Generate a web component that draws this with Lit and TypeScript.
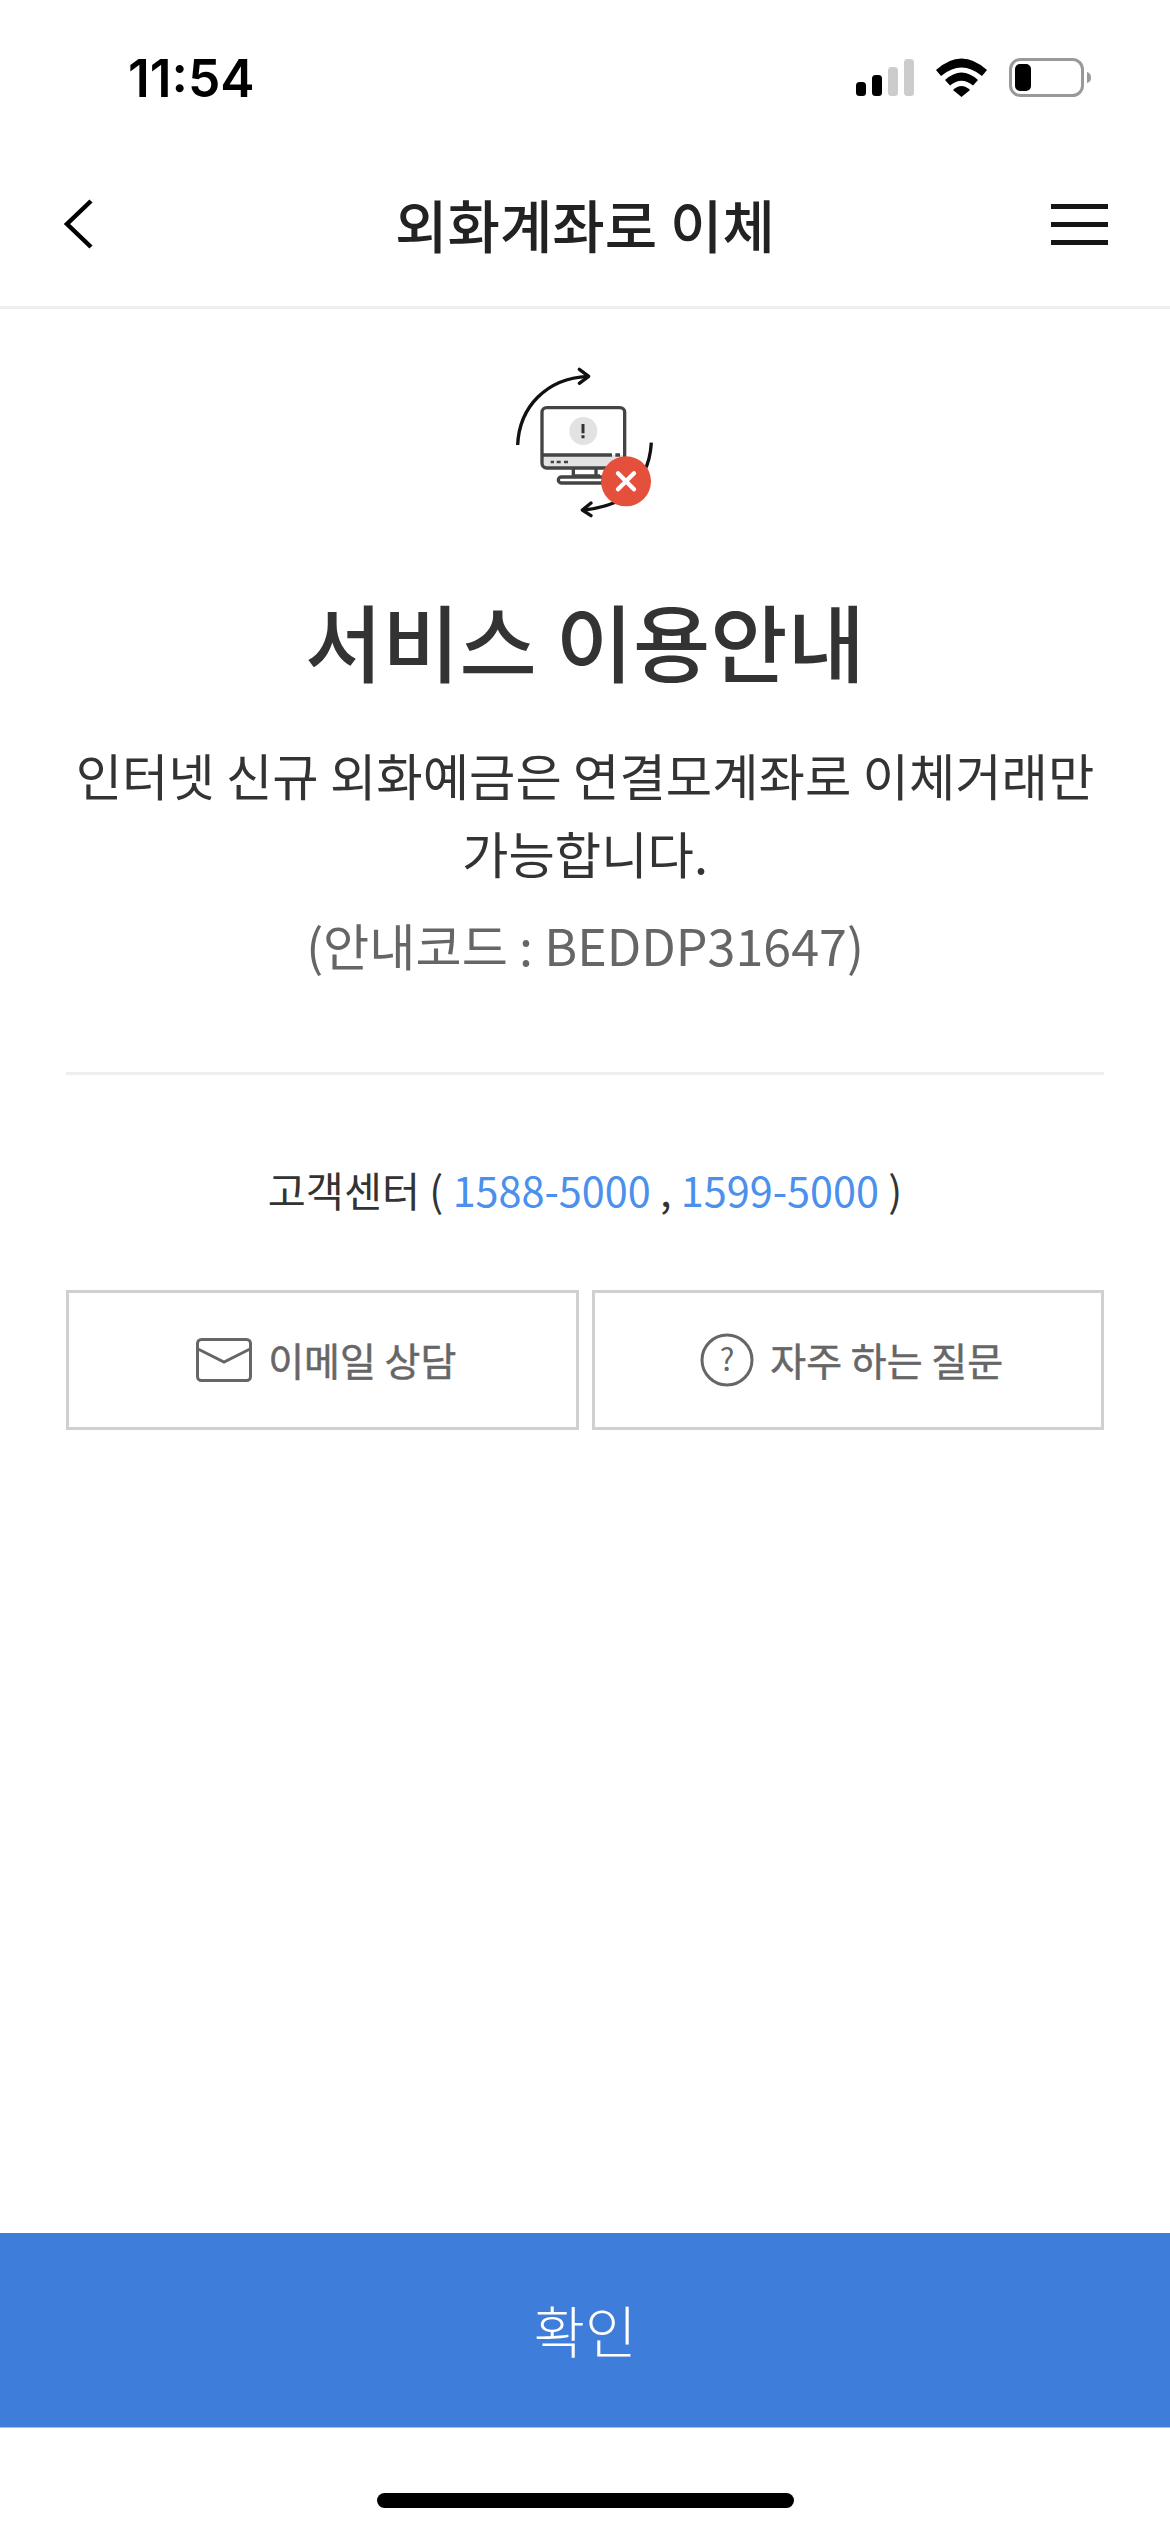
import { LitElement, html, css } from 'lit';
import { customElement } from 'lit/decorators.js';

@customElement('app-root')
export class AppRoot extends LitElement {
  static styles = css`
    :host {
      display: flex;
      flex-direction: column;
      width: 1170px;
      height: 2532px;
      background: #fff;
      font-family: "Noto Sans CJK KR", "Noto Sans", sans-serif;
      color: #333;
    }
    .status {
      height: 142px;
      display: flex;
      align-items: flex-start;
      justify-content: space-between;
      padding: 0 78px 0 128px;
    }
    .time {
      font-family: Inter, "Liberation Sans", sans-serif;
      font-size: 51.500px;
      font-weight: 600;
      line-height: 50px;
      margin-top: 53px;
      color: #000;
    }
    .status svg { margin-top: 58px; }
    .header {
      height: 167px;
      box-sizing: border-box;
      display: grid;
      grid-template-columns: 1fr auto 1fr;
      align-items: center;
      padding: 0 62px;
      border-bottom: 3px solid #eee;
    }
    .header .menu { justify-self: end; }
    .header h1 {
      margin: 0 0 2px;
      font-size: 57px;
      font-weight: 500;
      line-height: 70px;
      color: #222;
    }
    .main {
      display: flex;
      flex-direction: column;
      align-items: center;
      padding: 41px 66px 0;
    }
    .title {
      margin: 55px 0 0;
      font-size: 84px;
      font-weight: 500;
      line-height: 110px;
      color: #333;
    }
    .desc {
      margin: 41px 0 0;
      font-size: 50.400px;
      font-weight: 400;
      line-height: 78px;
      text-align: center;
      color: #333;
    }
    .code {
      margin: 13px 0 0;
      font-size: 50.200px;
      font-weight: 400;
      line-height: 79px;
      color: #666;
    }
    .rule {
      align-self: stretch;
      height: 3px;
      background: #eee;
      margin-top: 88px;
    }
    .contact {
      margin: 81px 0 0;
      font-size: 41.400px;
      font-weight: 400;
      line-height: 66px;
      color: #333;
    }
    .contact a { color: #4a90ec; text-decoration: none; }
    .actions {
      align-self: stretch;
      display: grid;
      grid-template-columns: 1fr 1fr;
      gap: 13px;
      margin-top: 68px;
    }
    .action {
      height: 140px;
      box-sizing: border-box;
      border: 3px solid #d0d0d0;
      padding-left: 8px;
      display: flex;
      align-items: center;
      justify-content: center;
      gap: 16px;
      font-size: 39px;
      font-weight: 400;
      color: #666;
    }
    .action span {
      padding-bottom: 3px;
      -webkit-text-stroke: 0.500px #666;
    }
    .confirm {
      margin-top: auto;
      height: 195px;
      box-sizing: border-box;
      padding-bottom: 4px;
      background: #3e7eda;
      border-bottom: 1px solid #9cc3f3;
      color: #fff;
      display: flex;
      align-items: center;
      justify-content: center;
      font-size: 56px;
      font-weight: 300;
    }
    .home {
      height: 104px;
      display: flex;
      justify-content: center;
      align-items: flex-start;
    }
    .home div {
      width: 417px;
      height: 15px;
      margin-top: 65px;
      border-radius: 7.500px;
      background: #000;
    }
  `;

  render() {
    return html`
      <div class="status">
        <div class="time">11:54</div>
        <svg width="236" height="40" viewBox="856 58 236 40">
          <rect x="856" y="82" width="10" height="14" rx="3.500" fill="#000" />
          <rect x="872" y="75" width="10" height="21" rx="3.500" fill="#000" />
          <rect x="888" y="67" width="10" height="29" rx="3.500" fill="#ccc" />
          <rect x="904" y="59" width="10" height="37" rx="3.500" fill="#ccc" />
          <path d="M936 70 Q961.500 47 987 70 L982 76 Q961.500 59 941 76 Z" fill="#000" />
          <path d="M945 80 Q961.500 65 978 80 L973 85.500 Q961.500 76 950 85.500 Z" fill="#000" />
          <path d="M953 90 Q961.500 82 970 90 L961.500 97 Z" fill="#000" />
          <rect x="1010.500" y="59.500" width="72" height="36" rx="10" fill="none" stroke="#999" stroke-width="3" />
          <rect x="1015" y="64" width="16" height="27" rx="5" fill="#000" />
          <path d="M1087 72 Q1091 73 1091 77.500 Q1091 82 1087 83 Z" fill="#999" />
        </svg>
      </div>
      <div class="header">
        <svg width="32" height="52" viewBox="0 0 32 52">
          <path d="M29 3 L5 26 L29 49" fill="none" stroke="#000" stroke-width="4.500" />
        </svg>
        <h1>외화계좌로 이체</h1>
        <svg class="menu" width="57" height="41" viewBox="0 0 57 41">
          <path d="M0 2.500 H57 M0 20.500 H57 M0 38.500 H57" stroke="#151515" stroke-width="5" />
        </svg>
      </div>
      <div class="main">
        <svg width="190" height="180" viewBox="0 0 570 540">
          <g fill="none" stroke="#111" stroke-width="10">
            <path d="M83 285 C88 170 170 85 293 79" />
            <path d="M268 58 L296 79 L268 100" stroke-linecap="round" stroke-linejoin="round" />
            <path d="M484 278 C482 310 476 340 462 365" />
            <path d="M380 455 C350 468 320 476 282 480" />
            <path d="M303 459 L277 480 L303 497" stroke-linecap="round" stroke-linejoin="round" />
          </g>
          <path d="M156 315 H404 V340 Q404 354 390 354 H170 Q156 354 156 340 Z" fill="#e2e2e2" />
          <g fill="none" stroke="#444" stroke-width="10" stroke-linejoin="round">
            <rect x="156" y="173" width="248" height="181" rx="14" />
            <path d="M156 315 H366 M376 315 H390" />
            <path d="M250 354 V380 M318 354 V380 M250 378 H330" />
            <rect x="205" y="381" width="160" height="18" rx="9" />
          </g>
          <path d="M182 336 H192 M200 336 H212 M222 336 H234" stroke="#444" stroke-width="8" />
          <circle cx="280" cy="243" r="42" fill="#e2e2e2" />
          <path d="M279 222 V250 M279 256 V265" stroke="#333" stroke-width="9" />
          <circle cx="408" cy="394" r="75" fill="#e4503c" />
          <path d="M384 370 L432 418 M432 370 L384 418" stroke="#fff" stroke-width="13" stroke-linecap="round" />
        </svg>
        <h2 class="title">서비스 이용안내</h2>
        <p class="desc">인터넷 신규 외화예금은 연결모계좌로 이체거래만 가능합니다.</p>
        <p class="code">(안내코드 : BEDDP31647)</p>
        <div class="rule"></div>
        <p class="contact">고객센터 ( <a>1588-5000</a> , <a>1599-5000</a> )</p>
        <div class="actions">
          <div class="action">
            <svg width="56" height="44" viewBox="0 0 56 44">
              <rect x="1.500" y="1.500" width="53" height="41" rx="4" fill="none" stroke="#666" stroke-width="3" />
              <path d="M2 11 L28 24 L54 11" fill="none" stroke="#666" stroke-width="3" />
            </svg>
            <span>이메일 상담</span>
          </div>
          <div class="action">
            <svg width="54" height="54" viewBox="0 0 54 54">
              <circle cx="27" cy="27" r="25" fill="none" stroke="#666" stroke-width="3" />
              <text x="27" y="38" text-anchor="middle" font-size="31" fill="#666">?</text>
            </svg>
            <span>자주 하는 질문</span>
          </div>
        </div>
      </div>
      <div class="confirm">확인</div>
      <div class="home"><div></div></div>
    `;
  }
}
